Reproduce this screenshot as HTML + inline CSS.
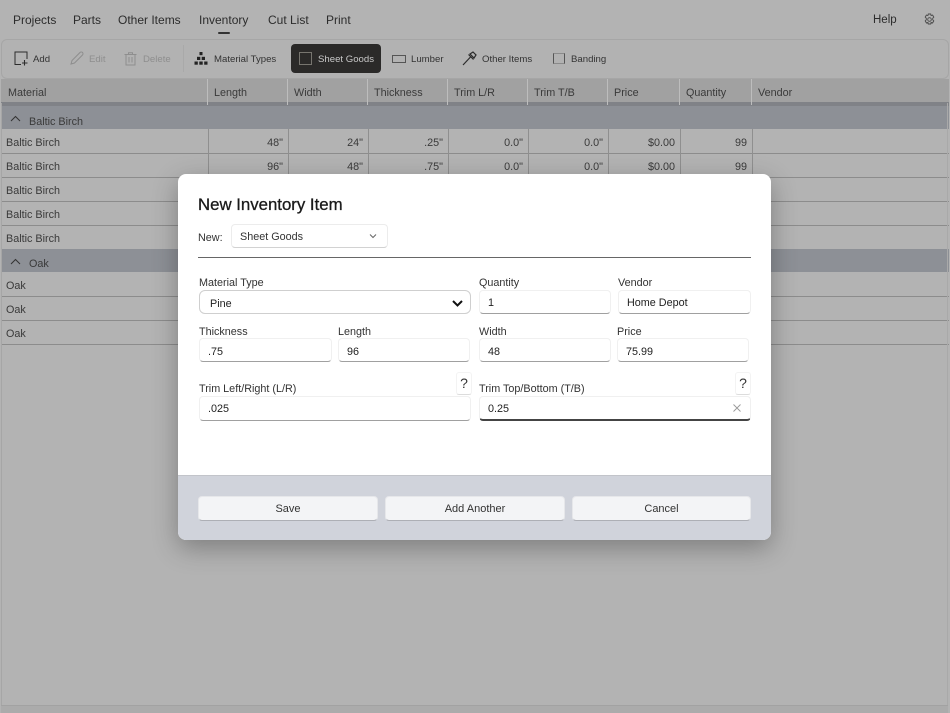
<!DOCTYPE html>
<html><head><meta charset="utf-8"><title>Inventory</title>
<style>
html,body{margin:0;padding:0;width:950px;height:713px;overflow:hidden;background:#b3b3b3;font-family:"Liberation Sans",sans-serif;color:#333}
.t{position:absolute;white-space:nowrap;line-height:16px;height:16px}
.r{text-align:right}
.a{position:absolute}
.nav{font-size:12px;color:#2c2c2c;top:12px}
.tb{font-size:9.6px;color:#333;top:52px}
.dis{color:#8e8e8e}
.th{font-size:10.8px;color:#3a3a3a;top:85px}
.td{font-size:10.8px;color:#3a3a3a}
.grp{left:1px;width:948px;background:#8d9096}
.row{left:1px;width:948px;height:1px;background:#8c8c8c}
.v{width:1px;background:#8f8f8f}
.hv{width:1px;background:#bdbdbd;top:79px;height:26px}
.lab{font-size:10.8px;color:#333}
.inp{position:absolute;box-sizing:border-box;background:#fff;border:1px solid #f0f0f0;border-bottom:1px solid #a0a0a0;border-radius:4px;height:24px}
.val{font-size:10.8px;color:#222}
.btn{position:absolute;box-sizing:border-box;top:496px;height:25px;background:#f3f4f6;border:1px solid #e6e7ea;border-bottom:1px solid #adafb5;border-radius:4px;font-size:11px;color:#333;text-align:center;line-height:24px}
.q{position:absolute;box-sizing:border-box;top:372px;width:16px;height:23px;background:#fff;border:1px solid #f3f3f3;border-bottom:1px solid #dcdcdc;border-radius:3px;font-size:14px;line-height:21px;text-align:center;color:#333}
</style></head><body>

<div class="t nav" style="left:13px">Projects</div>
<div class="t nav" style="left:73px">Parts</div>
<div class="t nav" style="left:118px">Other Items</div>
<div class="t nav" style="left:199px">Inventory</div>
<div class="t nav" style="left:268px">Cut List</div>
<div class="t nav" style="left:326px">Print</div>
<div class="t nav" style="left:873px;font-size:11.5px">Help</div>
<div class="a" style="left:218px;top:32px;width:12px;height:2px;background:#333;border-radius:1px"></div>
<svg class="a" style="left:923px;top:13px" width="13" height="13" viewBox="0 0 13 13" fill="none" stroke="#4a4a4a" stroke-width=".9"><path d="M5.3 1h2.4l.4 1.600 1.500-.5 1.200 2-1.100 1.200v1.400l1.100 1.200-1.200 2-1.500-.5-.4 1.600H5.300l-.4-1.600-1.500.5-1.200-2 1.100-1.200V5.300L2.200 4.100l1.200-2 1.500.5z"/><circle cx="6.500" cy="6.500" r="1.800"/></svg>

<!-- toolbar -->
<div class="a" style="left:1px;top:39px;width:946px;height:38px;border:1px solid #a6a6a6;border-radius:6px;background:#b2b2b2"></div>
<svg class="a" style="left:14px;top:51px" width="15" height="15" viewBox="0 0 15 15" fill="none" stroke="#2c2c2c" stroke-width="1"><path d="M7 13.500H1V1h12v7"/><path d="M10.500 9v5.500M8 12h5.500" stroke-width="1.100"/></svg>
<div class="t tb" style="left:33px">Add</div>
<svg class="a" style="left:70px;top:51px" width="14" height="14" viewBox="0 0 14 14" fill="none" stroke="#8e8e8e" stroke-width="1"><path d="M1 13l1-3.500L10 1.500a1.400 1.400 0 0 1 2.500 2.500L4.500 12z"/></svg>
<div class="t tb dis" style="left:89px">Edit</div>
<svg class="a" style="left:124px;top:52px" width="13" height="14" viewBox="0 0 13 14" fill="none" stroke="#8e8e8e" stroke-width="1"><path d="M.5 2.500h12M4.500 2.500V.8h4v1.700M2 2.500V13h9V2.500M5 5v5.500M8 5v5.500"/></svg>
<div class="t tb dis" style="left:143px">Delete</div>
<div class="a" style="left:183px;top:45px;width:1px;height:27px;background:#a9a9a9"></div>
<svg class="a" style="left:194px;top:52px" width="14" height="13" viewBox="0 0 14 13" fill="#222"><rect x="5.500" y="0" width="3" height="3.200"/><rect x="3" y="4.800" width="3.300" height="3.200"/><rect x="7.700" y="4.800" width="3.300" height="3.200"/><rect x="0.500" y="9.500" width="3.300" height="3.200"/><rect x="5.300" y="9.500" width="3.400" height="3.200"/><rect x="10.200" y="9.500" width="3.300" height="3.200"/></svg>
<div class="t tb" style="left:214px">Material Types</div>
<div class="a" style="left:291px;top:44px;width:90px;height:29px;background:#2b2a29;border-radius:4px"></div>
<div class="a" style="left:299px;top:52px;width:11px;height:11px;border:1px solid #77756f"></div>
<div class="t tb" style="left:318px;color:#c9c9c9">Sheet Goods</div>
<div class="a" style="left:392px;top:55px;width:12px;height:6px;border:1px solid #555"></div>
<div class="t tb" style="left:411px">Lumber</div>
<svg class="a" style="left:462px;top:51px" width="15" height="15" viewBox="0 0 15 15" fill="none" stroke="#2c2c2c" stroke-width="1.200"><path d="M1 14l7.500-8M6.500 3.500l5 5M8 3l3-2 3 3-2 3z"/></svg>
<div class="t tb" style="left:482px">Other Items</div>
<div class="a" style="left:553px;top:53px;width:10px;height:9px;border:1px solid #555;border-top-color:#8a8a8a;border-bottom-color:#8a8a8a"></div>
<div class="t tb" style="left:571px">Banding</div>

<!-- table header -->
<div class="a" style="left:1px;top:79px;width:948px;height:24px;background:#a1a1a1"></div>
<div class="a" style="left:1px;top:102px;width:948px;height:4px;background:#808287"></div>
<div class="a hv" style="left:207px"></div><div class="a hv" style="left:287px"></div><div class="a hv" style="left:367px"></div><div class="a hv" style="left:447px"></div><div class="a hv" style="left:527px"></div><div class="a hv" style="left:607px"></div><div class="a hv" style="left:679px"></div><div class="a hv" style="left:751px"></div>
<div class="t th" style="left:8px">Material</div>
<div class="t th" style="left:214px">Length</div>
<div class="t th" style="left:294px">Width</div>
<div class="t th" style="left:374px">Thickness</div>
<div class="t th" style="left:454px">Trim L/R</div>
<div class="t th" style="left:534px">Trim T/B</div>
<div class="t th" style="left:614px">Price</div>
<div class="t th" style="left:686px">Quantity</div>
<div class="t th" style="left:758px">Vendor</div>

<!-- groups -->
<div class="a grp" style="top:106px;height:23px"></div>
<svg class="a" style="left:10px;top:115px" width="11" height="7" viewBox="0 0 11 7" fill="none" stroke="#333" stroke-width="1"><path d="M1 6l4.500-4.500L10 6"/></svg>
<div class="t td" style="left:29px;top:114px">Baltic Birch</div>
<div class="a grp" style="top:249px;height:23px"></div>
<svg class="a" style="left:10px;top:258px" width="11" height="7" viewBox="0 0 11 7" fill="none" stroke="#333" stroke-width="1"><path d="M1 6l4.500-4.500L10 6"/></svg>
<div class="t td" style="left:29px;top:256px">Oak</div>

<!-- rows -->
<div class="a row" style="top:153px"></div><div class="a row" style="top:177px"></div><div class="a row" style="top:201px"></div><div class="a row" style="top:225px"></div><div class="a row" style="top:296px"></div><div class="a row" style="top:320px"></div><div class="a row" style="top:344px"></div>
<div class="a v" style="left:208px;top:129px;height:48px"></div><div class="a v" style="left:288px;top:129px;height:48px"></div><div class="a v" style="left:368px;top:129px;height:48px"></div><div class="a v" style="left:448px;top:129px;height:48px"></div><div class="a v" style="left:528px;top:129px;height:48px"></div><div class="a v" style="left:608px;top:129px;height:48px"></div><div class="a v" style="left:680px;top:129px;height:48px"></div><div class="a v" style="left:752px;top:129px;height:48px"></div>

<div class="t td" style="left:6px;top:135px">Baltic Birch</div>
<div class="t td" style="left:6px;top:159px">Baltic Birch</div>
<div class="t td" style="left:6px;top:183px">Baltic Birch</div>
<div class="t td" style="left:6px;top:207px">Baltic Birch</div>
<div class="t td" style="left:6px;top:231px">Baltic Birch</div>
<div class="t td" style="left:6px;top:278px">Oak</div>
<div class="t td" style="left:6px;top:302px">Oak</div>
<div class="t td" style="left:6px;top:326px">Oak</div>

<div class="t td r" style="left:223px;width:60px;top:135px">48"</div>
<div class="t td r" style="left:303px;width:60px;top:135px">24"</div>
<div class="t td r" style="left:383px;width:60px;top:135px">.25"</div>
<div class="t td r" style="left:463px;width:60px;top:135px">0.0"</div>
<div class="t td r" style="left:543px;width:60px;top:135px">0.0"</div>
<div class="t td r" style="left:615px;width:60px;top:135px">$0.00</div>
<div class="t td r" style="left:687px;width:60px;top:135px">99</div>
<div class="t td r" style="left:223px;width:60px;top:159px">96"</div>
<div class="t td r" style="left:303px;width:60px;top:159px">48"</div>
<div class="t td r" style="left:383px;width:60px;top:159px">.75"</div>
<div class="t td r" style="left:463px;width:60px;top:159px">0.0"</div>
<div class="t td r" style="left:543px;width:60px;top:159px">0.0"</div>
<div class="t td r" style="left:615px;width:60px;top:159px">$0.00</div>
<div class="t td r" style="left:687px;width:60px;top:159px">99</div>

<!-- bottom edge -->
<div class="a" style="left:1px;top:103px;width:1px;height:602px;background:#a6a6a6"></div>
<div class="a" style="left:947px;top:103px;width:1px;height:602px;background:#a9a9a9"></div>
<div class="a" style="left:1px;top:705px;width:947px;height:8px;background:#ababab;border-top:1px solid #a2a2a2;box-sizing:border-box"></div>

<!-- dialog -->
<div class="a" style="left:178px;top:174px;width:593px;height:366px;background:#fff;border-radius:8px;box-shadow:0 8px 26px rgba(0,0,0,.3);overflow:hidden">
  <div class="a" style="left:0;top:301px;width:593px;height:65px;background:#d0d3db;border-top:1px solid #c2c4ca;box-sizing:border-box"></div>
</div>
<div class="t" style="left:198px;top:195px;height:20px;line-height:20px;font-size:16.800px;color:#1a1a1a;-webkit-text-stroke:.3px #1a1a1a">New Inventory Item</div>
<div class="t lab" style="left:198px;top:230px">New:</div>
<div class="a" style="left:231px;top:224px;width:157px;height:24px;box-sizing:border-box;background:#fff;border:1px solid #ececec;border-bottom-color:#d2d2d2;border-radius:4px"></div>
<div class="t lab" style="left:240px;top:229px">Sheet Goods</div>
<svg class="a" style="left:369px;top:233px" width="8" height="6" viewBox="0 0 8 6" fill="none" stroke="#666" stroke-width="1"><path d="M1 1.500l3 3 3-3"/></svg>
<div class="a" style="left:198px;top:256.500px;width:553px;height:1.500px;background:#666"></div>

<div class="t lab" style="left:199px;top:275px">Material Type</div>
<div class="a" style="left:199px;top:290px;width:272px;height:24px;box-sizing:border-box;background:#fff;border:1px solid #cfcfcf;border-radius:6px"></div>
<div class="t val" style="left:210px;top:296px">Pine</div>
<svg class="a" style="left:452px;top:300px" width="11" height="7" viewBox="0 0 11 7" fill="none" stroke="#111" stroke-width="2"><path d="M1 1l4.500 4.500L10 1"/></svg>

<div class="t lab" style="left:479px;top:275px">Quantity</div>
<div class="inp" style="left:479px;top:290px;width:132px"></div>
<div class="t val" style="left:488px;top:295px">1</div>
<div class="t lab" style="left:618px;top:275px">Vendor</div>
<div class="inp" style="left:618px;top:290px;width:133px"></div>
<div class="t val" style="left:627px;top:295px">Home Depot</div>

<div class="t lab" style="left:199px;top:324px">Thickness</div>
<div class="inp" style="left:199px;top:338px;width:133px"></div>
<div class="t val" style="left:208px;top:344px">.75</div>
<div class="t lab" style="left:338px;top:324px">Length</div>
<div class="inp" style="left:338px;top:338px;width:132px"></div>
<div class="t val" style="left:347px;top:344px">96</div>
<div class="t lab" style="left:479px;top:324px">Width</div>
<div class="inp" style="left:479px;top:338px;width:132px"></div>
<div class="t val" style="left:488px;top:344px">48</div>
<div class="t lab" style="left:617px;top:324px">Price</div>
<div class="inp" style="left:617px;top:338px;width:132px"></div>
<div class="t val" style="left:626px;top:344px">75.99</div>

<div class="t lab" style="left:199px;top:381px">Trim Left/Right (L/R)</div>
<div class="q" style="left:456px">?</div>
<div class="inp" style="left:199px;top:396px;width:272px;height:25px"></div>
<div class="t val" style="left:208px;top:401px">.025</div>
<div class="t lab" style="left:479px;top:381px">Trim Top/Bottom (T/B)</div>
<div class="q" style="left:735px">?</div>
<div class="inp" style="left:479px;top:396px;width:272px;height:25px;border-bottom:2px solid #444"></div>
<div class="t val" style="left:488px;top:401px">0.25</div>
<svg class="a" style="left:733px;top:404px" width="8" height="8" viewBox="0 0 8 8" fill="none" stroke="#999" stroke-width=".9"><path d="M.5.500l7 7M7.500.500l-7 7"/></svg>

<div class="btn" style="left:198px;width:180px">Save</div>
<div class="btn" style="left:385px;width:180px">Add Another</div>
<div class="btn" style="left:572px;width:179px">Cancel</div>

</body></html>
